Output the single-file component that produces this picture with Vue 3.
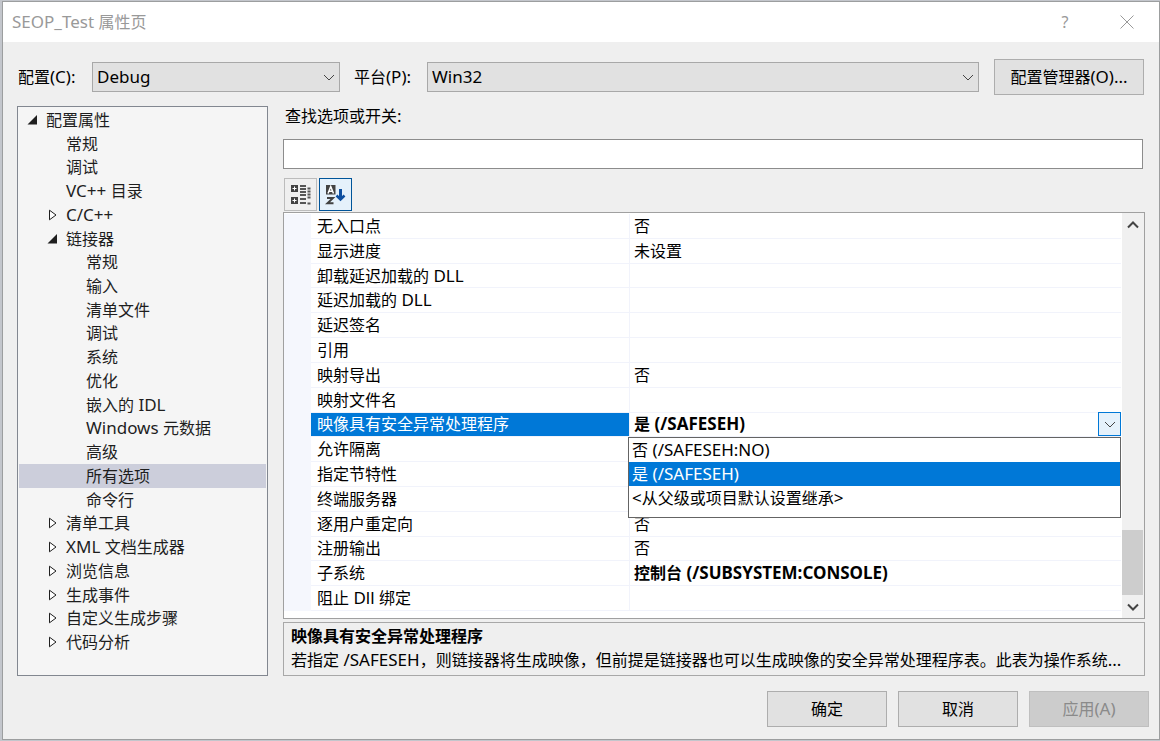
<script setup>
import { h, ref } from 'vue'

// Renders text with its Latin runs one step larger than the Chinese around them.
const MixedText = (props) =>
  h('span', { class: 'mixed' },
    props.text.split(/([\x20-\x7e]+)/).filter(Boolean).map((part) =>
      /[\x20-\x7e]/.test(part) ? h('span', { class: 'latin' }, part) : part))
MixedText.props = ['text']

const tree = [
  { text: '配置属性', level: 0, state: 'open' },
  { text: '常规', level: 1 },
  { text: '调试', level: 1 },
  { text: 'VC++ 目录', level: 1 },
  { text: 'C/C++', level: 1, state: 'closed' },
  { text: '链接器', level: 1, state: 'open' },
  { text: '常规', level: 2 },
  { text: '输入', level: 2 },
  { text: '清单文件', level: 2 },
  { text: '调试', level: 2 },
  { text: '系统', level: 2 },
  { text: '优化', level: 2 },
  { text: '嵌入的 IDL', level: 2 },
  { text: 'Windows 元数据', level: 2 },
  { text: '高级', level: 2 },
  { text: '所有选项', level: 2, selected: true },
  { text: '命令行', level: 2 },
  { text: '清单工具', level: 1, state: 'closed' },
  { text: 'XML 文档生成器', level: 1, state: 'closed' },
  { text: '浏览信息', level: 1, state: 'closed' },
  { text: '生成事件', level: 1, state: 'closed' },
  { text: '自定义生成步骤', level: 1, state: 'closed' },
  { text: '代码分析', level: 1, state: 'closed' },
]

const rows = [
  { name: '无入口点', value: '否' },
  { name: '显示进度', value: '未设置' },
  { name: '卸载延迟加载的 DLL', value: '' },
  { name: '延迟加载的 DLL', value: '' },
  { name: '延迟签名', value: '' },
  { name: '引用', value: '' },
  { name: '映射导出', value: '否' },
  { name: '映射文件名', value: '' },
  { name: '映像具有安全异常处理程序', value: '是 (/SAFESEH)', bold: true, active: true },
  { name: '允许隔离', value: '' },
  { name: '指定节特性', value: '' },
  { name: '终端服务器', value: '' },
  { name: '逐用户重定向', value: '否' },
  { name: '注册输出', value: '否' },
  { name: '子系统', value: '控制台 (/SUBSYSTEM:CONSOLE)', bold: true },
  { name: '阻止 Dll 绑定', value: '' },
]

const choices = ['否 (/SAFESEH:NO)', '是 (/SAFESEH)', '<从父级或项目默认设置继承>']
const chosen = ref(1)
const search = ref('')
</script>

<template>
  <div class="desktop">
    <section class="dialog" role="dialog" aria-labelledby="dialog-title">
      <header class="titlebar">
        <h1 id="dialog-title"><MixedText text="SEOP_Test 属性页" /></h1>
        <button class="caption help" type="button" aria-label="帮助">?</button>
        <button class="caption" type="button" aria-label="关闭">
          <svg width="14" height="14" viewBox="0 0 14 14"><path d="M.5.5l13 13M13.5.5l-13 13" /></svg>
        </button>
      </header>

      <div class="config">
        <label for="cfg"><MixedText text="配置(C):" /></label>
        <div class="combo combo-config">
          <select id="cfg"><option>Debug</option></select>
          <svg width="12" height="7" viewBox="0 0 12 7"><path d="M1 1l5 5 5-5" /></svg>
        </div>
        <label for="plat"><MixedText text="平台(P):" /></label>
        <div class="combo combo-platform">
          <select id="plat"><option>Win32</option></select>
          <svg width="12" height="7" viewBox="0 0 12 7"><path d="M1 1l5 5 5-5" /></svg>
        </div>
        <button class="btn manager" type="button"><MixedText text="配置管理器(O)..." /></button>
      </div>

      <div class="content">
        <ul class="tree" role="tree">
          <li
            v-for="(n, i) in tree" :key="i" role="treeitem"
            :class="['level-' + n.level, { selected: n.selected }]" :aria-selected="!!n.selected"
          >
            <svg class="twisty" width="11" height="12" viewBox="0 0 11 12">
              <path v-if="n.state === 'open'" class="filled" d="M10 1v9.500H.5z" />
              <path v-if="n.state === 'closed'" class="hollow" d="M2.500 1.200v9.600L9 6z" />
            </svg>
            <MixedText :text="n.text" />
          </li>
        </ul>

        <div class="pane">
          <label class="search-label" for="search"><MixedText text="查找选项或开关:" /></label>
          <input id="search" v-model="search" class="search" type="text">

          <div class="toolbar">
            <button class="tool" type="button" aria-label="按分类顺序">
              <svg width="21" height="21" viewBox="0 0 21 21">
                <path class="ink" d="M1 1h7v7H1zM1 13h7v7H1z" />
                <path class="paper" d="M2.500 4.500h4M4.500 2.500v4M2.500 16.500h4M4.500 14.500v4" />
                <path class="rule" d="M10 2h6M10 5h6M10 8h6M10 11h6M10 15h6M10 19h6" />
                <path class="rule" d="M17.500 4.500h3M17.500 7.500h3M17.500 10.500h3M17.500 13.500h3M17.500 19.500h3" />
              </svg>
            </button>
            <button class="tool pressed" type="button" aria-label="按字母顺序">
              <svg width="21" height="21" viewBox="0 0 21 21">
                <path class="ink" d="M1 1h9.500v9.500H1z" />
                <path class="letter-light" d="M3 9.500L5.750 2.500l2.750 7M4 7.300h3.500" />
                <path class="letter-dark" d="M2 14h6L2.500 19.300H8.500" />
                <path class="arrow" d="M15.500 5v10" />
                <path class="arrow-head" d="M11.500 11.500l4 4 4-4" />
              </svg>
            </button>
          </div>

          <div class="grid">
            <div class="sheet">
              <table>
                <tbody>
                  <tr v-for="r in rows" :key="r.name" :class="{ active: r.active }">
                    <th scope="row"><MixedText :text="r.name" /></th>
                    <td :class="{ bold: r.bold }">
                      <MixedText :text="r.value" />
                      <template v-if="r.active">
                        <button class="drop" type="button" aria-label="展开">
                          <svg width="12" height="7" viewBox="0 0 12 7"><path d="M1 1l5 5 5-5" /></svg>
                        </button>
                        <ul class="popup" role="listbox">
                          <li
                            v-for="(c, i) in choices" :key="c" role="option"
                            :aria-selected="i === chosen" :class="{ chosen: i === chosen }" @click="chosen = i"
                          >
                            <MixedText :text="c" />
                          </li>
                        </ul>
                      </template>
                    </td>
                  </tr>
                </tbody>
              </table>
            </div>
            <div class="scrollbar">
              <button type="button" aria-label="向上滚动">
                <svg width="12" height="8" viewBox="0 0 12 8"><path d="M1 6.500l5-5 5 5" /></svg>
              </button>
              <div class="track"><div class="thumb"></div></div>
              <button type="button" aria-label="向下滚动">
                <svg width="12" height="8" viewBox="0 0 12 8"><path d="M1 1.500l5 5 5-5" /></svg>
              </button>
            </div>
          </div>

          <div class="description">
            <h2>映像具有安全异常处理程序</h2>
            <p><MixedText text="若指定 /SAFESEH，则链接器将生成映像，但前提是链接器也可以生成映像的安全异常处理程序表。此表为操作系统..." /></p>
          </div>
        </div>
      </div>

      <footer class="actions">
        <button class="btn" type="button">确定</button>
        <button class="btn" type="button">取消</button>
        <button class="btn" type="button" disabled><MixedText text="应用(A)" /></button>
      </footer>
    </section>
  </div>
</template>

<style>
body { margin: 0; }
.mixed { white-space: pre; }
.mixed .latin { font-size: 17px; line-height: 1; }
</style>

<style scoped>
* { box-sizing: border-box; }
.desktop {
  height: 100vh;
  padding: 1px 0 1px 2px;
  display: flex;
  background: #c3c6cc;
  font: 16px/22px "Noto Sans", "Noto Sans CJK SC", sans-serif;
  color: #000;
}
.dialog {
  flex: 1;
  min-width: 0;
  display: flex;
  flex-direction: column;
  background: #efefef;
  border: 1px solid #9c9e9f;
}
button, input, select { font: inherit; color: inherit; margin: 0; }
h1, h2, p, ul { margin: 0; padding: 0; font-weight: normal; font-size: 16px; }
ul { list-style: none; }
svg { display: block; fill: none; stroke: #444; }

.titlebar {
  height: 40px;
  flex: none;
  display: flex;
  align-items: center;
  padding: 0 1px 0 9px;
  background: #fff;
  color: #999;
}
.titlebar h1 { flex: 1; }
.caption {
  width: 62px;
  height: 38px;
  padding: 0;
  border: 0;
  background: none;
  display: flex;
  align-items: center;
  justify-content: center;
}
.caption svg { stroke: #999; }

.config {
  display: flex;
  align-items: center;
  flex: none;
  padding: 17px 15px 0 15px;
}
.config label { flex: none; }
.combo { position: relative; height: 30px; }
.combo select {
  appearance: none;
  width: 100%;
  height: 30px;
  padding: 0 24px 0 4px;
  border: 1px solid #a8a8a8;
  border-radius: 0;
  background: #e1e1e1;
  font-size: 17px;
}
.combo svg { position: absolute; right: 5px; top: 12px; pointer-events: none; }
.config label[for="cfg"] { width: 74px; }
.config label[for="plat"] { width: 73px; }
.combo-config { flex: 0 0 248px; margin-right: 14px; }
.combo-platform { flex: 1; margin-right: 15px; }
.btn {
  width: 120px;
  height: 36px;
  padding: 0;
  border: 1px solid #adadad;
  background: #e1e1e1;
}
.btn:disabled { background: #ccc; border-color: #bfbfbf; color: #8a8a8a; }
.btn.manager { width: 150px; }

.content {
  flex: 1;
  min-height: 0;
  display: flex;
  gap: 15px;
  padding: 11px 14px 0 14px;
}
.tree {
  flex: 0 0 251px;
  display: flex;
  flex-direction: column;
  padding: 1px 1px 21px;
  border: 1px solid #828790;
  background: #f5f5f5;
  color: #1e1e1e;
}
.tree li { flex: 1 1 0; min-height: 0; display: flex; align-items: center; gap: 8px; }
.level-0 { padding-left: 8px; }
.level-1 { padding-left: 28px; }
.level-2 { padding-left: 48px; }
.tree .selected { background: #cccedb; }
.twisty { flex: none; }
.filled { fill: #1e1e1e; stroke: none; }
.hollow { stroke: #1e1e1e; fill: #fff; }

.pane { flex: 1; min-width: 0; display: flex; flex-direction: column; }
.search-label { padding: 0 2px; height: 20px; line-height: 20px; margin-bottom: 13px; }
.search {
  height: 30px;
  margin-right: 2px;
  padding: 0 4px;
  border: 1px solid #8c8c8c;
  border-radius: 0;
  background: #fff;
}
.toolbar { display: flex; gap: 2px; padding: 9px 0 1px 1px; }
.tool {
  width: 33px;
  height: 33px;
  padding: 0;
  display: flex;
  align-items: center;
  justify-content: center;
  border: 1px solid #bcbcbc;
  background: #efefef;
}
.tool.pressed { border-color: #005499; background: #e5f1fb; }
.ink { fill: #424242; stroke: none; }
.paper { stroke: #fff; }
.rule { stroke: #555; stroke-width: 2; }
.letter-light { stroke: #fff; stroke-width: 1.5; }
.letter-dark { stroke: #424242; stroke-width: 2; }
.arrow { stroke: #0e4fa0; stroke-width: 3; }
.arrow-head { stroke: #0e4fa0; stroke-width: 2.5; }

.grid {
  flex: 1;
  min-height: 0;
  display: flex;
  border: 1px solid #a0a0a0;
  background: #fff;
}
.sheet { flex: 1; min-width: 0; padding: 1px 1px 7px 0; display: flex; }
table { flex: 1; display: flex; border-left: 27px solid #f5f7fd; }
tbody { flex: 1; display: flex; flex-direction: column; }
tr { flex: 1 1 0; min-height: 0; display: flex; border-bottom: 1px solid #f1f3fb; }
th, td { display: flex; align-items: center; padding: 0 0 0 6px; text-align: left; font-weight: normal; min-width: 0; }
th { flex: 316; border-right: 1px solid #f1f3fb; }
td { flex: 493; position: relative; padding-left: 4px; }
.bold { font-weight: bold; }
.active th { background: #0078d7; color: #fff; }
.drop {
  width: 23px;
  height: 24px;
  padding: 0;
  margin-left: auto;
  display: flex;
  align-items: center;
  justify-content: center;
  border: 1px solid #0078d7;
  background: #e5f1fb;
}
.popup {
  position: absolute;
  z-index: 1;
  top: 100%;
  left: -2px;
  right: 0;
  margin-top: 1px;
  padding-bottom: 7px;
  border: 1px solid #646464;
  background: #fff;
  font-weight: normal;
}
.popup li { height: 24px; display: flex; align-items: center; padding-left: 3px; }
.popup .chosen { background: #0078d7; color: #fff; }

.scrollbar { flex: 0 0 22px; display: flex; flex-direction: column; background: #f0f0f0; }
.scrollbar button {
  height: 23px;
  padding: 0;
  display: flex;
  align-items: center;
  justify-content: center;
  border: 0;
  background: none;
}
.scrollbar svg { stroke-width: 2; }
.track { flex: 1; display: flex; flex-direction: column; justify-content: flex-end; }
.thumb { height: 18%; margin: 0 1px 0 0; background: #cdcdcd; }

.description {
  height: 54px;
  flex: none;
  margin-top: 3px;
  padding: 1px 7px;
  border: 1px solid #a8a8a8;
  overflow: hidden;
}
.description h2 { font-weight: bold; line-height: 24px; }
.description p { line-height: 24px; white-space: nowrap; }

.actions { flex: none; display: flex; justify-content: flex-end; gap: 11px; padding: 15px 10px 12px; }
</style>
